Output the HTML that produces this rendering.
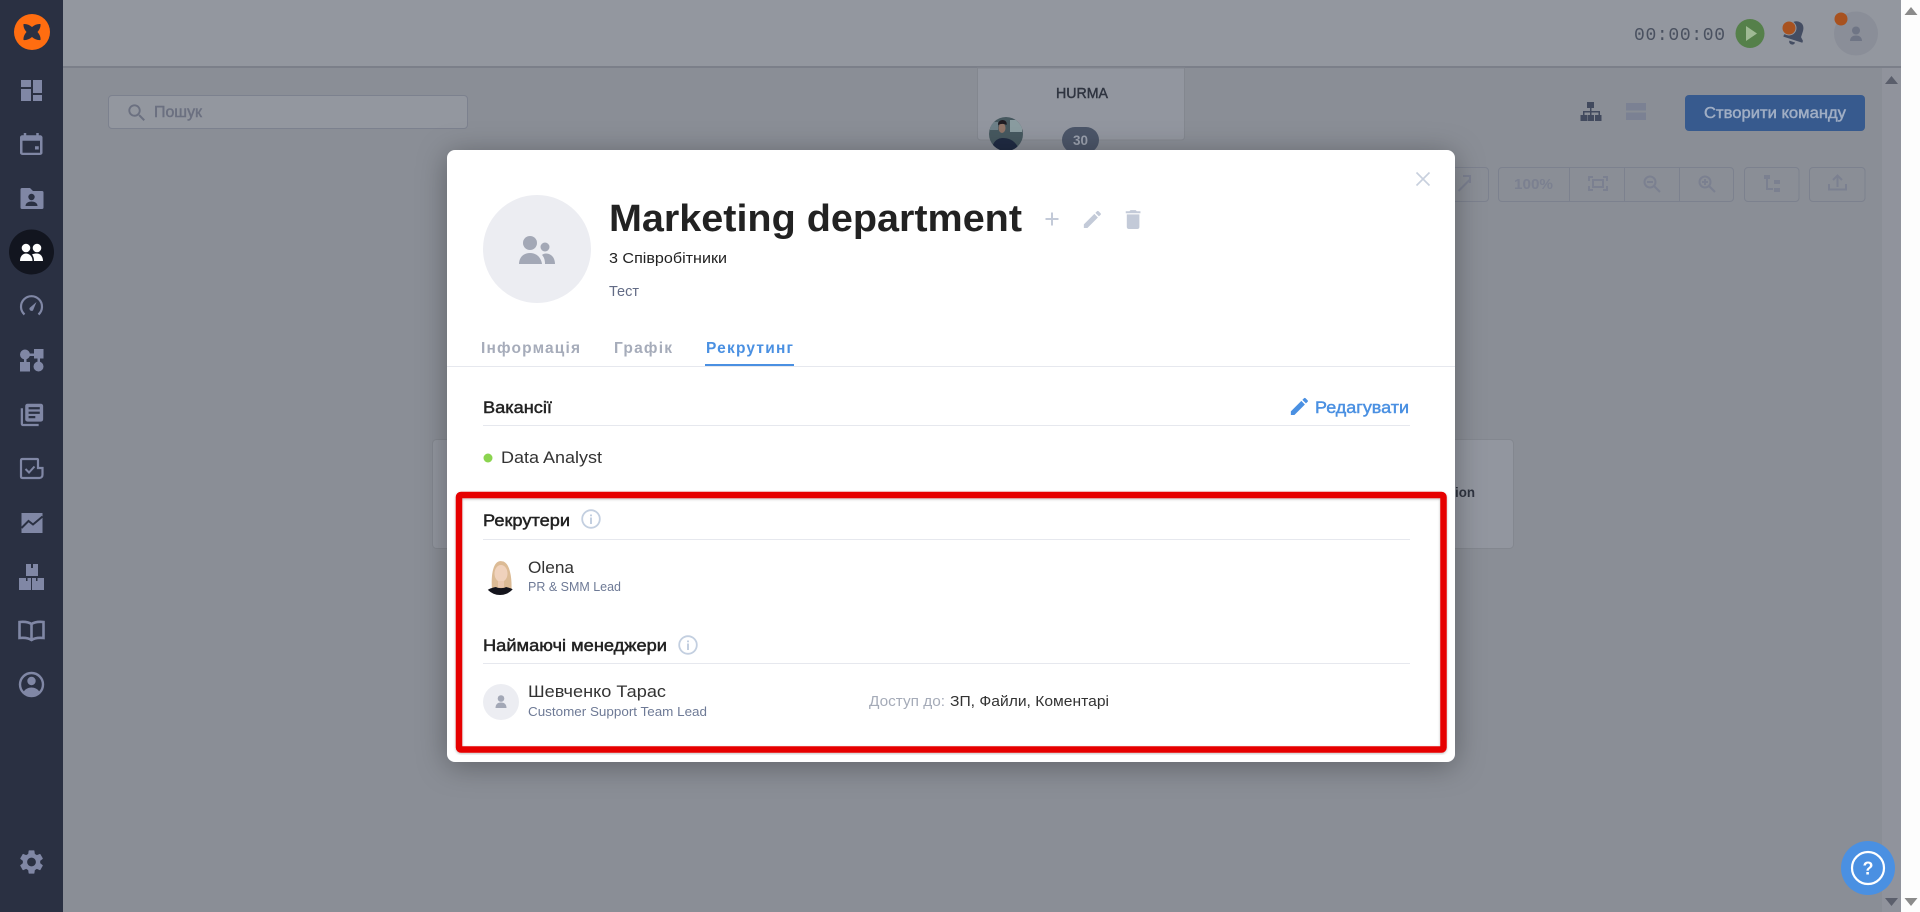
<!DOCTYPE html>
<html lang="uk">
<head>
<meta charset="utf-8">
<title>Marketing department</title>
<style>
html,body{margin:0;padding:0;width:1920px;height:912px;overflow:hidden;background:#fdfdfd}
svg{display:block}
text{font-family:"Liberation Sans",sans-serif}
.b{font-weight:700}
.m{stroke-width:.45;paint-order:stroke}
</style>
</head>
<body>
<svg xmlns="http://www.w3.org/2000/svg" width="1920" height="912" viewBox="0 0 1920 912">
<defs>
<filter id="ms" x="-10%" y="-10%" width="120%" height="125%"><feDropShadow dx="0" dy="4" stdDeviation="15" flood-color="#000" flood-opacity=".32"/></filter>
<filter id="rs" x="-2%" y="-2%" width="104%" height="104%"><feDropShadow dx="0" dy="1" stdDeviation="1.2" flood-color="#000" flood-opacity=".25"/></filter>
<clipPath id="c1"><circle cx="500" cy="578" r="17"/></clipPath>
<clipPath id="c2"><circle cx="1006" cy="134" r="17"/></clipPath>
</defs>

<!-- page background -->
<rect x="0" y="0" width="1920" height="912" fill="#fdfdfd"/>
<rect x="63" y="0" width="1838" height="912" fill="#8a8e96"/>
<rect x="63" y="0" width="1838" height="66" fill="#93979f"/>
<rect x="63" y="66" width="1838" height="2" fill="#7b7f89"/>
<rect x="1882" y="68" width="19" height="844" fill="#90939c"/>

<!-- sidebar -->
<rect x="0" y="0" width="63" height="912" fill="#2a3042"/>
<circle cx="32" cy="32" r="18" fill="#ff6d10"/>
<path d="M23.500 24Q28 23.500 32 27Q36 23.500 40.500 24Q41 28 37.500 32Q41 36 40.500 40Q36 40.500 32 37Q28 40.500 23.500 40Q23 36 26.500 32Q23 28 23.500 24z" fill="#2a3042"/>
<circle cx="31.500" cy="252" r="22.500" fill="#12151f"/>

<g fill="#8087a5">
  <!-- dashboard -->
  <rect x="21" y="80" width="10" height="7"/><rect x="21" y="89" width="10" height="12"/><rect x="33" y="80" width="9" height="13"/><rect x="33" y="95" width="9" height="6"/>
  <!-- calendar -->
  <path transform="translate(16.250,131.900) scale(1.250,1.100)" d="M18 13h-3v3h3v-3zM16 1v2H8V1H6v2H5c-1.110 0-1.990.9-1.990 2L3 19c0 1.100.89 2 2 2h14c1.100 0 2-.9 2-2V5c0-1.100-.9-2-2-2h-1V1h-2zm3 18H5V8h14v11z"/>
  <!-- folder -->
  <path d="M22 188h8l3 3h9c1 0 1.500.6 1.500 1.500v15c0 1-.5 1.500-1.500 1.500H22c-1 0-1.500-.5-1.500-1.500v-18c0-1 .5-1.500 1.500-1.500z"/>
</g>
<circle cx="31.500" cy="197" r="3.200" fill="#2a3042"/>
<path d="M25.500 206c0-3 3-4.500 6-4.500s6 1.500 6 4.500z" fill="#2a3042"/>

<!-- people active -->
<g fill="#fff">
  <circle cx="26" cy="248" r="4.300"/><circle cx="37" cy="248" r="4.300"/>
  <path d="M20 261c0-5 3-7.500 6-7.500s6.500 2.500 6.500 7.500z"/>
  <path d="M34 261c0-3-.7-5-2-6.500 1.300-.7 3-1 5-1 3 0 6 2.500 6 7.500z"/>
</g>

<!-- gauge -->
<path d="M24.500 314.500a10.500 10.500 0 1 1 14 0" fill="none" stroke="#8087a5" stroke-width="2.200"/>
<path d="M29.500 308l7-6-3.500 8.500a2.300 2.300 0 0 1-3.500-2.500z" fill="#8087a5"/>

<!-- flow -->
<g fill="#8087a5">
  <circle cx="25" cy="354.500" r="5"/><rect x="34" y="349" width="9.500" height="9.500"/>
  <rect x="20" y="362" width="10" height="9.500"/><circle cx="38.500" cy="366.500" r="5"/>
  <rect x="25" y="353.500" width="13" height="2.500"/><rect x="24" y="356" width="2.500" height="8"/><rect x="37.500" y="356" width="2.500" height="8"/>
  <!-- library -->
  <path transform="translate(18.500,401.500) scale(1.120)" d="M4 6H2v14c0 1.100.9 2 2 2h14v-2H4V6zm16-4H8c-1.100 0-2 .9-2 2v12c0 1.100.9 2 2 2h12c1.100 0 2-.9 2-2V4c0-1.100-.9-2-2-2zm-1 9H9V9h10v2zm-4 4H9v-2h6v2zm4-8H9V5h10v2z"/>
</g>
<!-- task -->
<path d="M22.500 459h14.500c.8 0 1 .5 1 1v8h4.500v6.500c0 2-1 3.500-3 3.500H22.500c-1 0-1.500-.6-1.500-1.500V460.500c0-1 .5-1.500 1.500-1.500z" fill="none" stroke="#8087a5" stroke-width="2.200"/>
<path d="M25.500 469l3.500 3.500 5.500-6" fill="none" stroke="#8087a5" stroke-width="2"/>
<!-- trend -->
<path d="M21.500 513h21v20h-21z" fill="#8087a5"/>
<path d="M21.500 528l7-7 4.500 3.500 9.500-8" fill="none" stroke="#2a3042" stroke-width="2"/>
<!-- boxes -->
<g fill="#8087a5">
  <path d="M26 564h5v4h2v-4h5v12H26z"/>
  <path d="M19 578h7v3h1.500v-3h3.500v12H19z"/>
  <path d="M32 578h4v3h1.500v-3h6.500v12H32z"/>
</g>
<!-- book -->
<path d="M31.500 624c-3-2-7-2.500-12-2v16c5-.5 9 0 12 2 3-2 7-2.500 12-2v-16c-5-.5-9 0-12 2z M31.500 624v16" fill="none" stroke="#8087a5" stroke-width="2.600"/>
<!-- account -->
<circle cx="31.500" cy="684.500" r="11.500" fill="none" stroke="#8087a5" stroke-width="2.400"/>
<circle cx="31.500" cy="681" r="4.200" fill="#8087a5"/>
<path d="M23.500 692c1.500-3 5-4.500 8-4.500s6.500 1.500 8 4.500c-2 2.200-5 3.500-8 3.500s-6-1.300-8-3.500z" fill="#8087a5"/>
<!-- gear -->
<path fill="#8087a5" transform="translate(17,847.500) scale(1.210)" d="M19.140 12.940c.04-.3.06-.61.06-.94 0-.32-.02-.64-.07-.94l2.030-1.580c.18-.14.23-.41.12-.61l-1.920-3.320c-.12-.22-.37-.29-.59-.22l-2.390.96c-.5-.38-1.030-.7-1.620-.94l-.36-2.540c-.04-.24-.24-.41-.48-.41h-3.840c-.24 0-.43.17-.47.41l-.36 2.540c-.59.24-1.130.57-1.620.94l-2.390-.96c-.22-.08-.47 0-.59.22L2.740 8.870c-.12.21-.08.47.12.61l2.030 1.580c-.05.3-.09.63-.09.94s.02.64.07.94l-2.030 1.580c-.18.14-.23.41-.12.61l1.920 3.320c.12.22.37.29.59.22l2.390-.96c.5.38 1.030.7 1.620.94l.36 2.540c.05.24.24.41.48.41h3.840c.24 0 .44-.17.47-.41l.36-2.540c.59-.24 1.130-.56 1.620-.94l2.390.96c.22.08.47 0 .59-.22l1.920-3.320c.12-.22.07-.47-.12-.61l-2.010-1.580zM12 15.600c-1.980 0-3.600-1.620-3.600-3.600s1.620-3.600 3.600-3.600 3.600 1.620 3.600 3.600-1.620 3.600-3.600 3.600z"/>

<!-- header right -->
<text x="1634" y="40" font-size="18" style="font-family:'Liberation Mono',monospace" fill="#4a5160" textLength="91" lengthAdjust="spacing">00:00:00</text>
<circle cx="1750" cy="33.500" r="14.500" fill="#55804a"/>
<path d="M1746 26l11 7.500-11 7.500z" fill="#9fba94"/>
<path transform="rotate(18 1795 33)" d="M1795 21c-5 0-7 4-7 8v6l-3 3v2h20v-2l-3-3v-6c0-4-2-8-7-8zM1792 42h6c0 2-1.500 3-3 3s-3-1-3-3z" fill="#444d62"/>
<circle cx="1789" cy="28" r="7.500" fill="#93979f"/>
<circle cx="1789" cy="28" r="6.500" fill="#a8521f"/>
<circle cx="1856" cy="33.500" r="22" fill="#8a8e98"/>
<circle cx="1856" cy="30.500" r="4" fill="#6f7585"/>
<path d="M1850 41c0-4 3-5.500 6-5.500s6 1.500 6 5.500z" fill="#6f7585"/>
<circle cx="1841" cy="19" r="6.500" fill="#a8521f"/>

<!-- search -->
<rect x="108.500" y="95.500" width="359" height="33" rx="3.500" fill="#93979f" stroke="#7c818e"/>
<path transform="translate(125.500,101.500) scale(.95)" d="M15.500 14h-.79l-.28-.27C15.410 12.590 16 11.110 16 9.500 16 5.910 13.090 3 9.500 3S3 5.910 3 9.500 5.910 16 9.500 16c1.610 0 3.090-.59 4.230-1.570l.27.28v.79l5 4.990L20.490 19l-4.990-5zm-6 0C7.010 14 5 11.990 5 9.500S7.010 5 9.500 5 14 7.010 14 9.500 11.990 14 9.500 14z" fill="#6b7080"/>
<text class="m" x="154" y="117" font-size="15.500" fill="#6b7080" stroke="#6b7080" textLength="48" lengthAdjust="spacingAndGlyphs">Пошук</text>

<!-- HURMA card -->
<path d="M977.500 68v69a3 3 0 0 0 3 3h201a3 3 0 0 0 3-3V68z" fill="#92969f" stroke="#83878f"/>
<text class="m" x="1056" y="98" font-size="14.500" fill="#2f3440" stroke="#2f3440" textLength="52" lengthAdjust="spacingAndGlyphs">HURMA</text>
<g clip-path="url(#c2)">
  <rect x="989" y="117" width="34" height="34" fill="#46585f"/>
  <rect x="1010" y="120" width="12" height="12" fill="#8a9ca0"/>
  <rect x="990" y="122" width="8" height="8" fill="#6d8088"/>
  <path d="M992 151c0-9 5-13 11-13s14 3 16 13z" fill="#1f2a42"/>
  <ellipse cx="1002" cy="128" rx="3.500" ry="5" fill="#8f7468"/>
  <path d="M998 125c0-3 2-5 4.500-5s5 2 4 5c-3-1.500-5-1.500-8.500 0z" fill="#1f1b22"/>
</g>
<rect x="1062" y="127" width="37" height="26" rx="13" fill="#4b5568"/>
<text class="b" x="1073" y="145" font-size="13.500" fill="#9aa0ad" textLength="15" lengthAdjust="spacingAndGlyphs">30</text>

<!-- view icons + create -->
<g fill="#424a5e">
  <rect x="1587" y="102" width="7" height="6"/><rect x="1590" y="108" width="1.500" height="3"/>
  <rect x="1583" y="111" width="17" height="1.500"/>
  <rect x="1583" y="111" width="1.500" height="4"/><rect x="1590" y="111" width="1.500" height="4"/><rect x="1598.500" y="111" width="1.500" height="4"/>
  <rect x="1580.500" y="115" width="6.500" height="6"/><rect x="1587.500" y="115" width="6.500" height="6"/><rect x="1595" y="115" width="6.500" height="6"/>
</g>
<rect x="1626" y="103" width="20" height="7.500" fill="#7b8193"/>
<rect x="1626" y="112.500" width="20" height="7.500" fill="#7b8193"/>
<rect x="1685" y="95" width="180" height="36" rx="4" fill="#375a8e"/>
<text class="m" x="1704" y="118" font-size="15.500" fill="#a0aec4" stroke="#a0aec4" textLength="142" lengthAdjust="spacingAndGlyphs">Створити команду</text>

<!-- toolbar -->
<g fill="none" stroke="#7c818e">
  <rect x="1440.500" y="167.500" width="48" height="34" rx="3.500"/>
  <rect x="1498.500" y="167.500" width="235" height="34" rx="3.500"/>
  <path d="M1569.500 167.500v34M1624.500 167.500v34M1679.500 167.500v34"/>
  <rect x="1744.500" y="167.500" width="54.500" height="34" rx="3.500"/>
  <rect x="1809.500" y="167.500" width="55.500" height="34" rx="3.500"/>
</g>
<text class="b" x="1514" y="189" font-size="15" fill="#7b8090" textLength="39" lengthAdjust="spacingAndGlyphs">100%</text>
<g fill="none" stroke="#7b8090" stroke-width="2">
  <path d="M1458.500 191l11-11M1463 176h7v7" />
  <path d="M1589 181v-4h4M1603 177h4v4M1607 186v4h-4M1593 190h-4v-4"/>
  <rect x="1593" y="180" width="10" height="7"/>
  <circle cx="1650" cy="182" r="5.500"/><path d="M1654 186l6 6M1647 182h6"/>
  <circle cx="1705" cy="182" r="5.500"/><path d="M1709 186l6 6M1702 182h6M1705 179v6"/>
  <path d="M1767 179v10h6"/>
  <path d="M1829 184v5.500h17V184M1837.500 187v-11M1833 180l4.500-4.500 4.500 4.500"/>
</g>
<g fill="#7b8090">
  <rect x="1764" y="175" width="6" height="4"/><rect x="1774" y="180" width="6" height="4"/><rect x="1774" y="188" width="6" height="4"/>
</g>

<!-- lower cards -->
<rect x="432.500" y="439.500" width="40" height="109" rx="4" fill="#92969f" stroke="#83878f"/>
<rect x="1430" y="439.500" width="83.500" height="109" rx="4" fill="#92969f" stroke="#83878f"/>
<text class="b" x="1455" y="497" font-size="14" fill="#2f3440" textLength="20" lengthAdjust="spacingAndGlyphs">ion</text>

<!-- scroll arrows -->
<path d="M1885 84l6.500-8 6.500 8z" fill="#5a5e6b"/>
<path d="M1885 898l6.500 8 6.500-8z" fill="#5a5e6b"/>
<path d="M1904.500 15l6.500-8 6.500 8z" fill="#8b8b8b"/>
<path d="M1904.500 898l6.500 8 6.500-8z" fill="#8b8b8b"/>

<!-- modal -->
<rect x="447" y="150" width="1008" height="612" rx="8" fill="#fff" filter="url(#ms)"/>

<circle cx="537" cy="249" r="54" fill="#ecedf2"/>
<g fill="#a3a8b6">
  <circle cx="530" cy="243" r="7"/><circle cx="545" cy="247" r="4.500"/>
  <path d="M519 264c0-7 5-11 11-11s11 4 12 11z"/>
  <path d="M545 264c0-4-1-7-3-9 1-1 2.500-1.500 4-1.500 5 0 9 4 9 10.500z"/>
</g>

<text class="b" x="609" y="231" font-size="38" fill="#222" textLength="413" lengthAdjust="spacingAndGlyphs">Marketing department</text>
<text x="609" y="263" font-size="15" fill="#222" textLength="118" lengthAdjust="spacingAndGlyphs">3 Співробітники</text>
<text x="609" y="296" font-size="15" fill="#626b85" textLength="30" lengthAdjust="spacingAndGlyphs">Тест</text>

<path d="M1045.500 219h13M1052 212.500v13" stroke="#c3cad8" stroke-width="2" fill="none"/>
<path fill="#c3cad8" transform="translate(1081,208) scale(.95)" d="M3 17.250V21h3.750L17.810 9.940l-3.750-3.750L3 17.250zM20.710 7.040c.39-.39.39-1.020 0-1.410l-2.340-2.340c-.39-.39-1.020-.39-1.410 0l-1.830 1.830 3.750 3.750 1.830-1.830z"/>
<path fill="#c3cad8" transform="translate(1120.500,207) scale(1.050)" d="M6 19c0 1.100.9 2 2 2h8c1.100 0 2-.9 2-2V7H6v12zM19 4h-3.500l-1-1h-5l-1 1H5v2h14V4z"/>
<path d="M1416.500 172.500l13 13M1429.500 172.500l-13 13" stroke="#c8d0de" stroke-width="1.600" fill="none"/>

<!-- tabs -->
<text class="b" x="481" y="353" font-size="15.500" fill="#a6acba" textLength="99" lengthAdjust="spacing">Інформація</text>
<text class="b" x="614" y="353" font-size="15.500" fill="#a6acba" textLength="58" lengthAdjust="spacing">Графік</text>
<text class="b" x="706" y="353" font-size="15.500" fill="#4a90e2" textLength="87" lengthAdjust="spacing">Рекрутинг</text>
<rect x="447" y="366" width="1008" height="1" fill="#e6e8ee"/>
<rect x="705" y="364" width="89" height="2" fill="#4a90e2"/>

<!-- vacancies -->
<text class="m" x="483" y="413" font-size="16.500" fill="#222" stroke="#222" textLength="69" lengthAdjust="spacingAndGlyphs">Вакансії</text>
<path fill="#4a90e2" transform="translate(1288,395) scale(.95)" d="M3 17.250V21h3.750L17.810 9.940l-3.750-3.750L3 17.250zM20.710 7.040c.39-.39.39-1.020 0-1.410l-2.340-2.340c-.39-.39-1.020-.39-1.410 0l-1.830 1.830 3.750 3.750 1.830-1.830z"/>
<text class="m" x="1315" y="413" font-size="17" fill="#4a90e2" stroke="#4a90e2" textLength="94" lengthAdjust="spacingAndGlyphs">Редагувати</text>
<rect x="483" y="425" width="927" height="1" fill="#e6e8ee"/>
<circle cx="488" cy="458" r="4.500" fill="#8bd44f"/>
<text x="501" y="463" font-size="16.500" fill="#333" textLength="101" lengthAdjust="spacingAndGlyphs">Data Analyst</text>

<!-- recruiters -->
<text class="m" x="483" y="526" font-size="16.500" fill="#222" stroke="#222" textLength="87" lengthAdjust="spacingAndGlyphs">Рекрутери</text>
<circle cx="591" cy="519" r="8.800" fill="none" stroke="#c3cfe0" stroke-width="1.800"/>
<path d="M591 517.500v6.500M591 514.500v1.800" stroke="#c3cfe0" stroke-width="2" fill="none"/>
<rect x="483" y="539" width="927" height="1" fill="#e6e8ee"/>

<g clip-path="url(#c1)">
  <rect x="483" y="561" width="34" height="34" fill="#fff"/>
  <path d="M492 590c-1-12 0-29 9-29s11 17 10.500 29z" fill="#dcbb95"/>
  <ellipse cx="501" cy="573.500" rx="6.500" ry="8.500" fill="#f0d2bc"/>
  <path d="M483 597c0-6 7-9 13-10 2 1.500 8 1.500 10 0 5 1 11 3 12 10z" fill="#14141c"/>
  <rect x="498" y="581" width="6" height="6.500" fill="#ebc9b0"/>
</g>
<text x="528" y="573" font-size="17" fill="#333" textLength="46" lengthAdjust="spacingAndGlyphs">Olena</text>
<text x="528" y="591" font-size="13" fill="#6e7a96" textLength="93" lengthAdjust="spacingAndGlyphs">PR &amp; SMM Lead</text>

<!-- hiring managers -->
<text class="m" x="483" y="651" font-size="16.500" fill="#222" stroke="#222" textLength="184" lengthAdjust="spacingAndGlyphs">Наймаючі менеджери</text>
<circle cx="688" cy="645" r="8.800" fill="none" stroke="#c3cfe0" stroke-width="1.800"/>
<path d="M688 643.500v6.500M688 640.500v1.800" stroke="#c3cfe0" stroke-width="2" fill="none"/>
<rect x="483" y="663" width="927" height="1" fill="#e6e8ee"/>

<circle cx="501" cy="702" r="18" fill="#ecedf2"/>
<circle cx="501" cy="698.500" r="3.300" fill="#a3a8b6"/>
<path d="M495.500 708c0-4 2.500-5.500 5.500-5.500s5.500 1.500 5.500 5.500z" fill="#a3a8b6"/>
<text x="528" y="697" font-size="17" fill="#333" textLength="138" lengthAdjust="spacingAndGlyphs">Шевченко Тарас</text>
<text x="528" y="716" font-size="13" fill="#6e7a96" textLength="179" lengthAdjust="spacingAndGlyphs">Customer Support Team Lead</text>
<text x="869" y="706" font-size="15" fill="#a5abb8" textLength="76" lengthAdjust="spacingAndGlyphs">Доступ до:</text>
<text x="950" y="706" font-size="15" fill="#333" textLength="159" lengthAdjust="spacingAndGlyphs">ЗП, Файли, Коментарі</text>

<!-- red highlight -->
<rect x="459" y="495" width="984.500" height="254.500" rx="2" fill="none" stroke="#e60000" stroke-width="6.500" filter="url(#rs)"/>

<!-- help -->
<circle cx="1868" cy="868" r="27" fill="#4a90e2"/>
<circle cx="1868" cy="868" r="16" fill="none" stroke="#fff" stroke-width="2.200"/>
<text class="b" x="1868" y="874.500" font-size="18" fill="#fff" text-anchor="middle">?</text>
</svg>
</body>
</html>
